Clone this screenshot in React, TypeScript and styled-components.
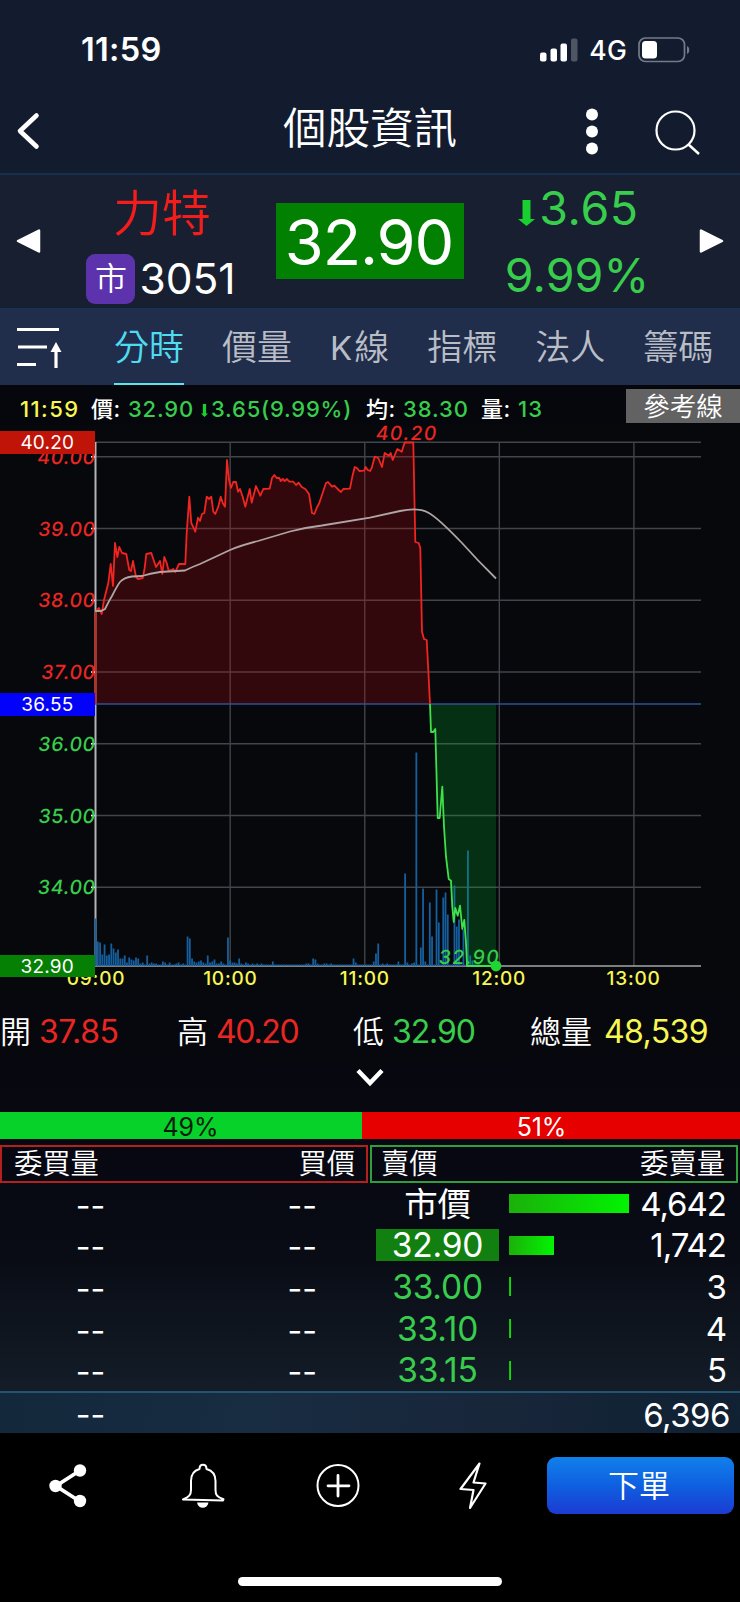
import React from "react";
import styled, { createGlobalStyle } from "styled-components";

const RED = "#ea2622";
const GREEN = "#38cd4c";
const YELLOW = "#f7f752";
const FONT = `Inter, "Noto Sans CJK TC", "Liberation Sans", sans-serif`;

const GlobalStyle = createGlobalStyle`
  * { box-sizing: border-box; }
  html, body { margin: 0; padding: 0; background: #000; }
  body { font-family: ${FONT}; color: #fff; }
`;

const Screen = styled.main`
  width: 740px;
  height: 1602px;
  display: flex;
  flex-direction: column;
  overflow: hidden;
  background: #05070b;
`;

const Num = styled.span<{ $size: number; $color?: string; $ls?: number; $weight?: number }>`
  font-size: ${(p) => p.$size}px;
  line-height: 1;
  font-weight: ${(p) => p.$weight ?? 400};
  color: ${(p) => p.$color ?? "#fff"};
  letter-spacing: ${(p) => p.$ls ?? 0}px;
  white-space: nowrap;
`;

/* status bar */
const StatusBar = styled.header`
  height: 90px;
  flex: none;
  display: flex;
  align-items: center;
  padding: 10px 50px 0 81px;
  background: #131c2f;
`;
const StatusRight = styled.div`
  margin-left: auto;
  display: flex;
  align-items: center;
  gap: 11px;
`;

/* navigation */
const NavBar = styled.nav`
  height: 85px;
  flex: none;
  display: grid;
  grid-template-columns: 240px 1fr 240px;
  align-items: center;
  background: #131c2f;
  border-bottom: 2px solid #14304a;
`;
const NavLeft = styled.div`
  padding: 0 0 1px 16px;
  display: flex;
`;
const NavTitle = styled.h1`
  margin: 0 0 5px 0;
  text-align: center;
  font-size: 43.5px;
  line-height: 1;
  font-weight: 350;
  white-space: nowrap;
`;
const NavRight = styled.div`
  display: flex;
  align-items: center;
  justify-content: flex-end;
  gap: 57px;
  padding: 0 39px 0 0;
`;

/* quote */
const Quote = styled.section`
  height: 133px;
  flex: none;
  display: grid;
  grid-template-columns: 62px 200px 214px 202px 62px;
  align-items: center;
  background: #171f31;
`;
const Arrow = styled.div<{ $right?: boolean }>`
  display: flex;
  justify-content: ${(p) => (p.$right ? "flex-end" : "flex-start")};
  padding: 0 16px 2px;
`;
const NameBlock = styled.div`
  display: flex;
  flex-direction: column;
  align-items: center;
  gap: 13px;
  padding-top: 8px;
`;
const StockName = styled.div`
  font-size: 49px;
  line-height: 54px;
  font-weight: 350;
  color: #f31d1b;
`;
const CodeRow = styled.div`
  display: flex;
  align-items: center;
  gap: 4px;
  padding-right: 2px;
`;
const Badge = styled.span`
  width: 49px;
  height: 50px;
  border-radius: 9px;
  background: #5d33ad;
  font-size: 32px;
  font-weight: 350;
  line-height: 49px;
  text-align: center;
`;
const PriceBox = styled.div`
  width: 188px;
  height: 76px;
  margin: 0 auto 2px 14px;
  padding: 3px 2px 0 0;
  display: flex;
  align-items: center;
  justify-content: center;
  background: #028002;
`;
const ChangeBlock = styled.div`
  display: flex;
  flex-direction: column;
  align-items: center;
  gap: 20px;
`;
const ChangeRow = styled.div`
  display: flex;
  align-items: center;
  gap: 4px;
  padding-left: 3px;
`;
const QuoteArrow = styled.div`
  display: flex;
  padding-top: 9px;
`;

/* tabs */
const Tabs = styled.div`
  height: 77px;
  flex: none;
  display: flex;
  gap: 38px;
  padding-left: 16px;
  background: #202e4b;
  border-top: 1px solid #153450;
`;
const TabIcon = styled.div`
  width: 60px;
  padding-top: 18px;
`;
const Tab = styled.div<{ $active?: boolean }>`
  height: 76px;
  flex: none;
  font-size: 35px;
  line-height: 76px;
  white-space: nowrap;
  font-weight: 350;
  color: ${(p) => (p.$active ? "#4fdcf2" : "#b9bdc6")};
  border-bottom: 2px solid ${(p) => (p.$active ? "#5ce4ee" : "transparent")};
`;
const Latin = styled.span`
  font-size: 33px;
  font-weight: 400;
  letter-spacing: 2px;
`;

/* info line */
const InfoLine = styled.div`
  height: 40px;
  flex: none;
  display: flex;
  align-items: flex-start;
  background: #05070c;
`;
const InfoText = styled.div`
  display: flex;
  align-items: center;
  height: 47px;
  padding-left: 20px;
  font-size: 22px;
  line-height: 24px;
  font-weight: 500;
  white-space: nowrap;
`;
const InfoItem = styled.span<{ $color?: string; $w: number; $ls?: number }>`
  width: ${(p) => p.$w}px;
  color: ${(p) => p.$color ?? "#fff"};
  letter-spacing: ${(p) => p.$ls ?? 0.4}px;
  display: flex;
  align-items: center;
  gap: 3px;
`;
const InfoArrow = styled.span`
  display: flex;
  padding-top: 4px;
`;
const RefButton = styled.button`
  margin: 4px 0 0 auto;
  width: 114px;
  height: 34px;
  padding: 0;
  border: 0;
  background: #626262;
  color: #fff;
  font-family: inherit;
  font-size: 26.5px;
  font-weight: 350;
  line-height: 34px;
`;

const ChartSvg = styled.svg`
  display: block;
  flex: none;
  overflow: visible;
`;

/* stats */
const Lower = styled.section`
  height: 443px;
  flex: none;
  display: flex;
  flex-direction: column;
  background: linear-gradient(#07080c 0, #070812 40%, #090c15 60%, #131c27 90%, #16222f 100%);
`;
const Stats = styled.div`
  height: 78px;
  flex: none;
  display: grid;
  grid-template-columns: 177px 176px 177px 1fr;
  align-items: center;
  padding-top: 5px;
`;
const Stat = styled.div<{ $gap?: number }>`
  display: flex;
  align-items: center;
  gap: ${(p) => p.$gap ?? 8}px;
`;
const StatLabel = styled.span`
  font-size: 31px;
  line-height: 40px;
  font-weight: 350;
`;
const Expand = styled.div`
  height: 44px;
  display: flex;
  justify-content: center;
`;
const Ratio = styled.div`
  height: 27px;
  flex: none;
  display: flex;
`;
const RatioPart = styled.div<{ $bg: string; $w: number; $pad: string }>`
  width: ${(p) => p.$w}px;
  padding: ${(p) => p.$pad};
  background: ${(p) => p.$bg};
  display: flex;
  align-items: center;
  justify-content: center;
`;
const BookHead = styled.div`
  height: 38px;
  flex: none;
  margin-top: 6px;
  display: flex;
  gap: 2px;
`;
const HeadBox = styled.div<{ $color: string; $left: number }>`
  width: 368px;
  border: 2px solid ${(p) => p.$color};
  display: flex;
  justify-content: space-between;
  padding: 0 11px 0 ${(p) => p.$left}px;
  font-size: 28.3px;
  line-height: 35px;
  font-weight: 350;
`;
const Book = styled.div`
  height: 208px;
  flex: none;
  display: flex;
  flex-direction: column;
`;
const BookRow = styled.div`
  height: 41.6px;
  flex: none;
  display: grid;
  grid-template-columns: 181px 195px 123px 130px 1fr;
  align-items: center;
`;
const Dash = styled.span<{ $right?: boolean }>`
  text-align: ${(p) => (p.$right ? "right" : "center")};
  padding-right: ${(p) => (p.$right ? "59px" : "0")};
  padding-top: 4px;
  font-size: 32px;
  line-height: 32px;
`;
const PriceCell = styled.div<{ $hot?: boolean }>`
  height: 32px;
  font-size: 33.5px;
  line-height: 33px;
  font-weight: 375;
  letter-spacing: -0.2px;
  text-align: center;
  background: ${(p) => (p.$hot ? "#118011" : "transparent")};
`;
const Depth = styled.span`
  display: block;
  height: 19px;
  margin-left: 10px;
  background: linear-gradient(90deg, #1bb00a, #02f402);
`;
const Qty = styled.div`
  padding: 1px 14px 0 0;
  text-align: right;
`;
const TotalRow = styled.div`
  height: 42px;
  flex: none;
  display: grid;
  grid-template-columns: 181px 1fr;
  align-items: center;
  border-top: 2px solid #235573;
  background: linear-gradient(100deg, #13283b 0%, #182c42 35%, #18263a 65%, #0f2133 100%);
`;
const TotalQty = styled(Qty)`
  padding: 5px 10px 0 0;
`;

/* bottom bar */
const BottomBar = styled.footer`
  height: 106px;
  flex: none;
  display: flex;
  align-items: center;
  background: #000;
`;
const Action = styled.div`
  width: 135px;
  display: flex;
  justify-content: center;
`;
const OrderButton = styled.button`
  margin: 0 0 1px 7px;
  width: 187px;
  height: 57px;
  padding: 0 3px 5px 0;
  border: 0;
  border-radius: 9px;
  background: linear-gradient(#1180ea, #0f5cdf 55%, #1c3bd2);
  color: #fff;
  font-family: inherit;
  font-size: 31px;
  font-weight: 350;
`;
const HomeArea = styled.div`
  flex: 1;
  background: #000;
  padding-top: 38px;
`;
const HomeIndicator = styled.div`
  width: 264px;
  height: 9px;
  margin: 0 auto;
  border-radius: 5px;
  background: #fff;
`;

/* chart data */
const PRICE_UP =
  "95.5,611 97,610 99,608 101.7,614 104,600 108.3,583 110.7,564 113,586 115,543 117.3,557 119.3,547 122,553 126.3,554 129.3,570 131,571 133,561 136,577 138,579 142.7,578 144.7,568 146.3,554 151.3,553 156,567 160,561 162.3,574 164.3,557 166.7,563 168.7,571 173.3,569 175.3,572 179,564 185.3,564 186.7,533 189.3,496.7 191.3,523 195.3,531.7 198,517.7 200,521 202,514 204.3,513 206.7,496.7 209,499 211.3,496.7 213.3,511.7 215.3,514 218.3,506.7 220.7,496.7 222.7,503 225,506.7 227,460 229,480 231,488 233.3,482 236,482 238,491.7 240,489 242.7,496.7 245.3,506.7 249.7,489 251.7,502.7 256,486 260.3,495.7 263.3,489 269.7,488.7 272,478 274.3,475 276.7,478 279.3,478 280.7,481 282.7,479 284.7,481 287,479 289.3,481.7 293.3,481.7 296,485 298.7,482.7 301.7,487 305.3,489 309,494 312,513 314.3,514 316.7,508 319.3,503 321.7,495.7 326,483 328,482 332,486.7 334.3,485.7 338.7,490 341,492 343.3,489 350,488.7 352.3,476.7 354.7,467 357.3,468.3 359.3,471 364,470.7 365.7,467 367.7,470 370,471 371.7,468 374.7,456.7 378.3,458 382,467 384.7,453 389,455.7 390.7,453 392.7,460 397.3,449 401.7,451.7 404.7,442.5 413.3,442.5 415.3,542 418.7,543 420.3,548 422,631.7 424,639 426.7,640 428.3,670 430,704";
const PRICE_DOWN =
  "430,704 431,732 433.3,732 435.3,729 437.7,818 439.7,818 442.3,786.7 444,826.7 446,856.7 448.7,879 451,880.7 452.3,906.7 453.7,922 455.3,908 457.7,915.7 460,905.7 462.3,929 464.3,920 466,943 467,966 496,966";
const AVERAGE =
  "M95 611L101 611L105 609Q110 599 112 596Q117 586 120 582Q124 577.5 132 576.5L142 576Q150 573.5 160 572L185 570.5Q192 567 200 564L215 557L230 550Q242 545 258 541L290 531.5Q305 527.5 322 525.5L370 517.7L400 511Q418 507 428 512.5Q437 517 462 543Q478 561 496 578.5";
const VOLUME_OPEN = [
  47, 24, 23, 11, 21, 10, 11, 22, 17, 13, 16, 7, 7, 10, 3, 8, 6, 5, 8, 7, 2, 3, 1, 10, 2, 3, 2, 2, 1, 1, 4, 3, 1, 3,
  1, 1, 2, 3, 1, 2, 1, 29, 27, 7, 4, 3, 4, 5, 3, 2, 10, 3, 4, 6, 2, 2, 4, 2, 1, 28, 5, 3, 3, 2, 7, 2, 1, 3, 2, 1, 2, 1,
  2, 1, 2, 1, 1, 1, 1, 4,
];
const VOLUME_LATE: Record<number, number> = {
  94: 2, 95: 2, 97: 7, 98: 6, 99: 2, 102: 2, 103: 2, 105: 2, 115: 7, 116: 3, 124: 4, 125: 12, 126: 22, 128: 2, 130: 2,
  135: 4, 138: 92, 139: 3, 141: 2, 142: 3, 143: 213, 145: 18, 146: 77, 147: 4, 149: 63, 150: 29, 152: 76, 153: 43,
  155: 68, 156: 73, 157: 51, 160: 80, 161: 39, 162: 46, 164: 36, 166: 115, 167: 10, 168: 5,
};
const volumeAt = (i: number) => (VOLUME_OPEN[i] ?? VOLUME_LATE[i] ?? 1) + 0.5;
const minuteX = (i: number) => 95.6 + i * 2.243;
const priceY = (p: number) => 456.8 + (40 - p) * 71.75;

function Chart() {
  const levels = [40, 39, 38, 37, 36, 35, 34];
  const hours = ["09:00", "10:00", "11:00", "12:00", "13:00"];
  const tags = [
    { label: "40.20", y: 431, h: 23, fill: "#c01409" },
    { label: "36.55", y: 693, h: 23, fill: "#0202fb" },
    { label: "32.90", y: 955, h: 22, fill: "#058005" },
  ];
  return (
    <ChartSvg width="740" height="565" viewBox="0 425 740 565" fontFamily={FONT}>
      <rect x="0" y="425" width="740" height="565" fill="#07080c" />
      <g stroke="#414448" strokeWidth="1.4">
        <line x1="95" x2="701" y1="442.3" y2="442.3" />
        {levels.map((p) => (
          <line key={p} x1="95" x2="701" y1={priceY(p)} y2={priceY(p)} />
        ))}
        {[60, 120, 180, 240].map((m) => (
          <line key={m} x1={minuteX(m)} x2={minuteX(m)} y1="442" y2="966" />
        ))}
      </g>
      <line x1="95.5" x2="95.5" y1="442" y2="966" stroke="#b4b4b6" strokeWidth="2" />
      <line x1="95" x2="701" y1="966" y2="966" stroke="#a4a7aa" strokeWidth="1.6" />
      <g fill="#165f9e">
        {Array.from({ length: 172 }, (_, i) => (
          <rect key={i} x={minuteX(i) - 0.9} y={966 - volumeAt(i)} width="1.8" height={volumeAt(i)} />
        ))}
      </g>
      <polygon points={`95.5,704 ${PRICE_UP}`} fill="#c8080c" fillOpacity="0.23" />
      <polygon points={`${PRICE_DOWN} 496,704`} fill="#00c832" fillOpacity="0.21" />
      <line x1="95" x2="701" y1="704" y2="704" stroke="#304f96" strokeWidth="1.5" />
      <line x1="95.5" x2="95.5" y1="611" y2="704" stroke="#c5281f" strokeWidth="2" />
      <polyline points={PRICE_UP} fill="none" stroke="#f02420" strokeWidth="1.8" strokeLinejoin="round" />
      <polyline points={PRICE_DOWN} fill="none" stroke="#3fe04a" strokeWidth="1.8" strokeLinejoin="round" />
      <path d={AVERAGE} fill="none" stroke="#b0a5a5" strokeWidth="1.8" />
      <g stroke="#fff" strokeWidth="1.6">
        {levels.map((p) => (
          <line key={p} x1="91" x2="95" y1={priceY(p)} y2={priceY(p)} />
        ))}
      </g>
      <g fontSize="19.5" fontWeight="450" letterSpacing="0.6">
        {levels.map((p) => (
          <text
            key={p}
            transform={`translate(95 ${priceY(p) + 7}) skewX(-8)`}
            textAnchor="end"
            fill={p > 36.55 ? RED : GREEN}
          >
            {p.toFixed(2)}
          </text>
        ))}
        <text transform="translate(375 439.5) skewX(-8)" fill={RED} letterSpacing="1.3">
          40.20
        </text>
        <text transform="translate(438 963.5) skewX(-8)" fill={GREEN} letterSpacing="1.3">
          32.90
        </text>
      </g>
      <circle cx="496" cy="966" r="5.4" fill="#1fd632" />
      <g fontSize="19" fontWeight="500" letterSpacing="0.8" fill={YELLOW} textAnchor="middle">
        {hours.map((h, i) => (
          <text key={h} x={96 + i * 134.4} y="984.5">
            {h}
          </text>
        ))}
      </g>
      {tags.map((t) => (
        <g key={t.label}>
          <rect x="0" y={t.y} width="95" height={t.h} fill={t.fill} />
          <text x="47.3" y={t.y + 18.3} fontSize="19" letterSpacing="0.2" textAnchor="middle" fill="#fff">
            {t.label}
          </text>
        </g>
      ))}
    </ChartSvg>
  );
}

const DownArrow = ({ w, h }: { w: number; h: number }) => (
  <svg width={w} height={h} viewBox="0 0 17 26" preserveAspectRatio="none">
    <path d="M4.5 0H12.5V19H17L8.5 26L0 19H4.5Z" fill="#18d02f" />
  </svg>
);

const asks = [
  { price: "市價", qty: "4,642", bar: 120, color: "#fff" },
  { price: "32.90", qty: "1,742", bar: 45, color: "#fff", hot: true },
  { price: "33.00", qty: "3", bar: 1.5, color: GREEN },
  { price: "33.10", qty: "4", bar: 1.5, color: GREEN },
  { price: "33.15", qty: "5", bar: 1.5, color: GREEN },
];

export default function App() {
  return (
    <Screen>
      <GlobalStyle />
      <StatusBar>
        <Num $size={32.5} $weight={600} $ls={0.3}>11:59</Num>
        <StatusRight>
          <svg width="38" height="24" viewBox="0 0 38 24" fill="#fff">
            <rect x="0" y="14.5" width="6.5" height="9" rx="2" />
            <rect x="10.5" y="10.5" width="6.5" height="13" rx="2" />
            <rect x="20.5" y="5.5" width="6.5" height="18" rx="2" />
            <rect x="31" y="0.5" width="6.5" height="23" rx="2" opacity="0.25" />
          </svg>
          <Num $size={26.5} $weight={450} $ls={0.3}>4G</Num>
          <svg width="52" height="26" viewBox="0 0 52 26">
            <rect x="1" y="1" width="45.5" height="23.5" rx="6.5" fill="none" stroke="#747b88" strokeWidth="1.7" />
            <rect x="4" y="4" width="15" height="17.5" rx="3.5" fill="#fff" />
            <path d="M49 9c3 1.2 3 6.8 0 8Z" fill="#747b88" />
          </svg>
        </StatusRight>
      </StatusBar>

      <NavBar>
        <NavLeft>
          <svg width="24" height="38" viewBox="0 0 24 38">
            <path d="M20.5 3.5L4 19L20.5 34.5" fill="none" stroke="#fff" strokeWidth="4.6" strokeLinecap="round" strokeLinejoin="round" />
          </svg>
        </NavLeft>
        <NavTitle>個股資訊</NavTitle>
        <NavRight>
          <svg width="12" height="48" viewBox="0 0 12 48" fill="#fff">
            <circle cx="6" cy="6.5" r="6" />
            <circle cx="6" cy="23.5" r="6" />
            <circle cx="6" cy="40.5" r="6" />
          </svg>
          <svg width="46" height="46" viewBox="0 0 46 46" fill="none" stroke="#fff" strokeWidth="2.2">
            <circle cx="20.5" cy="21.5" r="19" />
            <path d="M33.5 35.5L44 45" strokeWidth="2.5" />
          </svg>
        </NavRight>
      </NavBar>

      <Quote>
        <Arrow>
          <svg width="25" height="26" viewBox="0 0 25 26">
            <path d="M2 13L23 2.5V23.5Z" fill="#fff" stroke="#fff" strokeWidth="2.5" strokeLinejoin="round" />
          </svg>
        </Arrow>
        <NameBlock>
          <StockName>力特</StockName>
          <CodeRow>
            <Badge>市</Badge>
            <Num $size={42.5} $ls={0}>3051</Num>
          </CodeRow>
        </NameBlock>
        <PriceBox>
          <Num $size={63} $ls={-1.1}>32.90</Num>
        </PriceBox>
        <ChangeBlock>
          <ChangeRow>
            <QuoteArrow><DownArrow w={17} h={26} /></QuoteArrow>
            <Num $size={46.5} $color={GREEN} $weight={375} $ls={0.6}>3.65</Num>
          </ChangeRow>
          <Num $size={46.5} $color={GREEN} $weight={375} $ls={0.1}>9.99%</Num>
        </ChangeBlock>
        <Arrow $right>
          <svg width="25" height="26" viewBox="0 0 25 26">
            <path d="M23 13L2 2.5V23.5Z" fill="#fff" stroke="#fff" strokeWidth="2.5" strokeLinejoin="round" />
          </svg>
        </Arrow>
      </Quote>

      <Tabs>
        <TabIcon>
          <svg width="46" height="42" viewBox="0 0 46 42" stroke="#fff" strokeWidth="3" fill="none">
            <path d="M1 2.5H43M2 20H31M1 37.5H20" />
            <path d="M40 41V20" strokeWidth="3.2" />
            <path d="M40 15L45.5 25H34.5Z" fill="#fff" stroke="none" />
          </svg>
        </TabIcon>
        <Tab $active>分時</Tab>
        <Tab>價量</Tab>
        <Tab><Latin>K</Latin>線</Tab>
        <Tab>指標</Tab>
        <Tab>法人</Tab>
        <Tab>籌碼</Tab>
      </Tabs>

      <InfoLine>
        <InfoText>
          <InfoItem $w={71} $color={YELLOW} $ls={1.4}>11:59</InfoItem>
          <InfoItem $w={37}>價:</InfoItem>
          <InfoItem $w={73} $color={GREEN} $ls={0.8}>32.90</InfoItem>
          <InfoItem $w={165} $color={GREEN} $ls={0.8}>
            <InfoArrow><DownArrow w={7} h={13} /></InfoArrow>
            3.65(9.99%)
          </InfoItem>
          <InfoItem $w={37}>均:</InfoItem>
          <InfoItem $w={78} $color={GREEN} $ls={0.9}>38.30</InfoItem>
          <InfoItem $w={37}>量:</InfoItem>
          <InfoItem $w={40} $color={GREEN} $ls={1.2}>13</InfoItem>
        </InfoText>
        <RefButton>參考線</RefButton>
      </InfoLine>

      <Chart />

      <Lower>
        <Stats>
          <Stat><StatLabel>開</StatLabel><Num $size={32} $color={RED} $weight={375} $ls={-0.4}>37.85</Num></Stat>
          <Stat><StatLabel>高</StatLabel><Num $size={32} $color={RED} $weight={375} $ls={-1.3}>40.20</Num></Stat>
          <Stat><StatLabel>低</StatLabel><Num $size={32} $color={GREEN} $weight={375} $ls={-1.1}>32.90</Num></Stat>
          <Stat $gap={12}><StatLabel>總量</StatLabel><Num $size={32} $color={YELLOW} $weight={375} $ls={-0.6}>48,539</Num></Stat>
        </Stats>
        <Expand>
          <svg width="28" height="20" viewBox="0 0 28 20">
            <path d="M2 2.5L14 15L26 2.5" fill="none" stroke="#fff" strokeWidth="4.4" />
          </svg>
        </Expand>
        <Ratio>
          <RatioPart $bg="#06d229" $w={362} $pad="3px 0 0 19px"><Num $size={25} $color="#0c1c0c">49%</Num></RatioPart>
          <RatioPart $bg="#e60000" $w={378} $pad="3px 19px 0 0"><Num $size={25} $ls={-0.2}>51%</Num></RatioPart>
        </Ratio>
        <BookHead>
          <HeadBox $color="#b3211f" $left={12}><span>委買量</span><span>買價</span></HeadBox>
          <HeadBox $color="#2f9e3b" $left={9}><span>賣價</span><span>委賣量</span></HeadBox>
        </BookHead>
        <Book>
          {asks.map((a) => (
            <BookRow key={a.price}>
              <Dash>--</Dash>
              <Dash $right>--</Dash>
              <PriceCell $hot={a.hot} style={{ color: a.color }}>{a.price}</PriceCell>
              <Depth style={{ width: a.bar }} />
              <Qty><Num $size={33} $ls={-1} $weight={375}>{a.qty}</Num></Qty>
            </BookRow>
          ))}
        </Book>
        <TotalRow>
          <Dash>--</Dash>
          <TotalQty><Num $size={33} $ls={-0.5} $weight={375}>6,396</Num></TotalQty>
        </TotalRow>
      </Lower>

      <BottomBar>
        <Action>
          <svg width="38" height="44" viewBox="0 0 38 44" fill="#fff">
            <path d="M31 6.5L7 22L31 37.5" fill="none" stroke="#fff" strokeWidth="3.8" />
            <circle cx="31" cy="6.5" r="6.2" />
            <circle cx="6.5" cy="22" r="6.2" />
            <circle cx="31" cy="37" r="6.2" />
          </svg>
        </Action>
        <Action>
          <svg width="46" height="46" viewBox="0 0 46 46" fill="none" stroke="#fff" strokeWidth="2">
            <path d="M19.5 6C19.5 0.2 26.5 0.2 26.5 6C32 7.500 35.500 11 35.500 18V27C35.500 32 37 34 43.5 36.200L43 37.500L3 36.500C9 34 11 32 11 27V18C11 11 14 7.500 19.5 6Z" strokeLinejoin="round" />
            <path d="M17 39.500H28.5C27.5 46.500 18 46.500 17 39.500Z" fill="#fff" stroke="none" />
          </svg>
        </Action>
        <Action>
          <svg width="46" height="46" viewBox="0 0 46 46" fill="none" stroke="#fff" strokeWidth="2">
            <circle cx="23" cy="22.5" r="20.5" />
            <path d="M23 12.500V33M13 22.800H34" strokeWidth="2.8" strokeLinecap="round" />
          </svg>
        </Action>
        <Action>
          <svg width="30" height="48" viewBox="0 0 30 48" fill="none" stroke="#fff" strokeWidth="2.200" strokeLinejoin="round">
            <path d="M21.5 1.500L2.5 27L15.500 28L12 46L27.5 21.500L15.500 20.500Z" />
          </svg>
        </Action>
        <OrderButton>下單</OrderButton>
      </BottomBar>
      <HomeArea>
        <HomeIndicator />
      </HomeArea>
    </Screen>
  );
}
